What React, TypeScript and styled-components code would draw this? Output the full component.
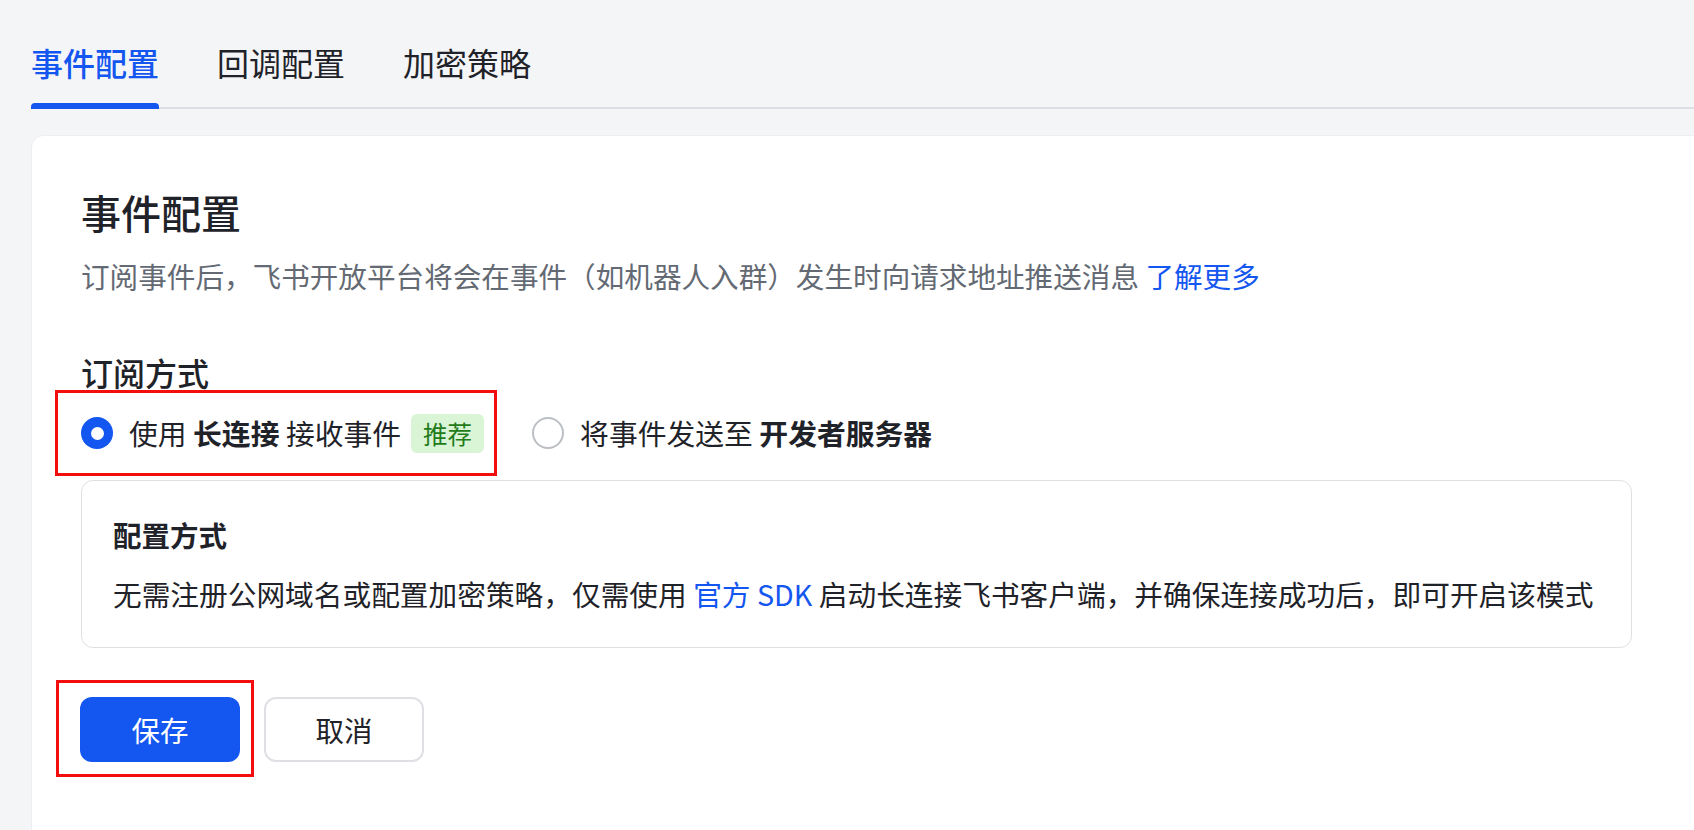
import React from "react";
import styled, { createGlobalStyle } from "styled-components";

const GlobalStyle = createGlobalStyle`
  html, body {
    margin: 0;
    padding: 0;
    background: #f4f5f7;
    overflow: hidden;
  }
  body {
    font-family: "Noto Sans CJK SC", "Noto Sans", sans-serif;
    color: #1f2329;
  }
  * { box-sizing: border-box; }
`;

const Page = styled.div`
  width: 1694px;
  height: 830px;
  padding: 40px 0 0 31px;
  overflow: hidden;
`;

const TabBar = styled.div`
  display: flex;
  gap: 58px;
  border-bottom: 2px solid #dcdfe3;
  margin-right: -10px;
`;

const Tab = styled.div<{ $active?: boolean }>`
  position: relative;
  font-size: 32px;
  line-height: 44px;
  padding-bottom: 23px;
  color: ${(p) => (p.$active ? "#1456f0" : "#1f2329")};
  font-weight: ${(p) => (p.$active ? 500 : 400)};
  &::after {
    content: "";
    display: ${(p) => (p.$active ? "block" : "none")};
    position: absolute;
    left: 0;
    right: 0;
    bottom: -2px;
    height: 6px;
    border-radius: 4px 4px 0 0;
    background: #1456f0;
  }
`;

const Card = styled.div`
  margin-top: 26px;
  margin-right: -20px;
  background: #ffffff;
  border: 1px solid #eceef1;
  border-radius: 12px;
  padding: 48px 0 80px 49px;
  min-height: 760px;
`;

const Heading = styled.h1`
  margin: 0;
  font-size: 40px;
  line-height: 56px;
  font-weight: 500;
  color: #1f2329;
`;

const Description = styled.p`
  margin: 16px 0 0;
  font-size: 28.6px;
  line-height: 40px;
  color: #646a73;
`;

const Link = styled.a`
  color: #1456f0;
  text-decoration: none;
`;

const SectionTitle = styled.h2`
  margin: 54px 0 0;
  font-size: 32px;
  line-height: 44px;
  font-weight: 500;
  color: #1f2329;
`;

const RadioRow = styled.div`
  display: flex;
  align-items: center;
  gap: 48px;
  margin-top: 19px;
  height: 40px;
`;

const Highlight = styled.div<{ $t: number; $r: number; $b: number; $l: number }>`
  position: relative;
  display: inline-flex;
  &::after {
    content: "";
    position: absolute;
    top: ${(p) => -p.$t}px;
    right: ${(p) => -p.$r}px;
    bottom: ${(p) => -p.$b}px;
    left: ${(p) => -p.$l}px;
    border: 3px solid #f40d0d;
    pointer-events: none;
  }
`;

const Option = styled.label`
  display: flex;
  align-items: center;
  font-size: 28.8px;
  line-height: 40px;
  color: #1f2329;
  cursor: pointer;
  white-space: pre;
`;

const RadioDot = styled.span<{ $checked?: boolean }>`
  width: 32px;
  height: 32px;
  border-radius: 50%;
  margin-right: 16px;
  flex: none;
  background: ${(p) => (p.$checked ? "#1456f0" : "#ffffff")};
  border: ${(p) => (p.$checked ? "none" : "2px solid #bbbfc4")};
  display: flex;
  align-items: center;
  justify-content: center;
  &::after {
    content: "";
    display: ${(p) => (p.$checked ? "block" : "none")};
    width: 13px;
    height: 13px;
    border-radius: 50%;
    background: #ffffff;
  }
`;

const Strong = styled.strong`
  font-weight: 700;
`;

const Badge = styled.span`
  margin-left: 10px;
  height: 39px;
  padding: 0 12px;
  border-radius: 6px;
  background: #d9f5d6;
  color: #237b19;
  font-size: 24.5px;
  line-height: 39px;
`;

const ConfigBox = styled.div`
  margin-top: 27px;
  width: 1551px;
  border: 1.5px solid #dee0e3;
  border-radius: 12px;
  padding: 34px 31px 33px;
`;

const ConfigTitle = styled.div`
  font-size: 28.5px;
  line-height: 40px;
  font-weight: 600;
  color: #1f2329;
`;

const ConfigText = styled.div`
  margin-top: 19px;
  font-size: 28.7px;
  line-height: 40px;
  color: #1f2329;
  white-space: pre;
`;

const Actions = styled.div`
  display: flex;
  gap: 24px;
  margin-top: 49px;
  margin-left: -1px;
`;

const Button = styled.button<{ $primary?: boolean }>`
  width: 160px;
  height: 65px;
  border-radius: 12px;
  font-family: inherit;
  font-size: 28.5px;
  cursor: pointer;
  background: ${(p) => (p.$primary ? "#1456f0" : "#ffffff")};
  color: ${(p) => (p.$primary ? "#ffffff" : "#1f2329")};
  border: ${(p) => (p.$primary ? "none" : "2px solid #dee0e3")};
`;

export default function App() {
  return (
    <>
      <GlobalStyle />
      <Page>
        <TabBar>
          <Tab $active>事件配置</Tab>
          <Tab>回调配置</Tab>
          <Tab>加密策略</Tab>
        </TabBar>
        <Card>
          <Heading>事件配置</Heading>
          <Description>
            订阅事件后，飞书开放平台将会在事件（如机器人入群）发生时向请求地址推送消息{" "}
            <Link href="#">了解更多</Link>
          </Description>
          <SectionTitle>订阅方式</SectionTitle>
          <RadioRow>
            <Highlight $t={23} $r={13} $b={23} $l={26}>
              <Option>
                <RadioDot $checked />
                使用 <Strong>长连接</Strong> 接收事件
                <Badge>推荐</Badge>
              </Option>
            </Highlight>
            <Option>
              <RadioDot />
              将事件发送至 <Strong>开发者服务器</Strong>
            </Option>
          </RadioRow>
          <ConfigBox>
            <ConfigTitle>配置方式</ConfigTitle>
            <ConfigText>
              无需注册公网域名或配置加密策略，仅需使用 <Link href="#">官方 SDK</Link> 启动长连接飞书客户端，并确保连接成功后，即可开启该模式
            </ConfigText>
          </ConfigBox>
          <Actions>
            <Highlight $t={17} $r={14} $b={15} $l={24}>
              <Button $primary>保存</Button>
            </Highlight>
            <Button>取消</Button>
          </Actions>
        </Card>
      </Page>
    </>
  );
}
